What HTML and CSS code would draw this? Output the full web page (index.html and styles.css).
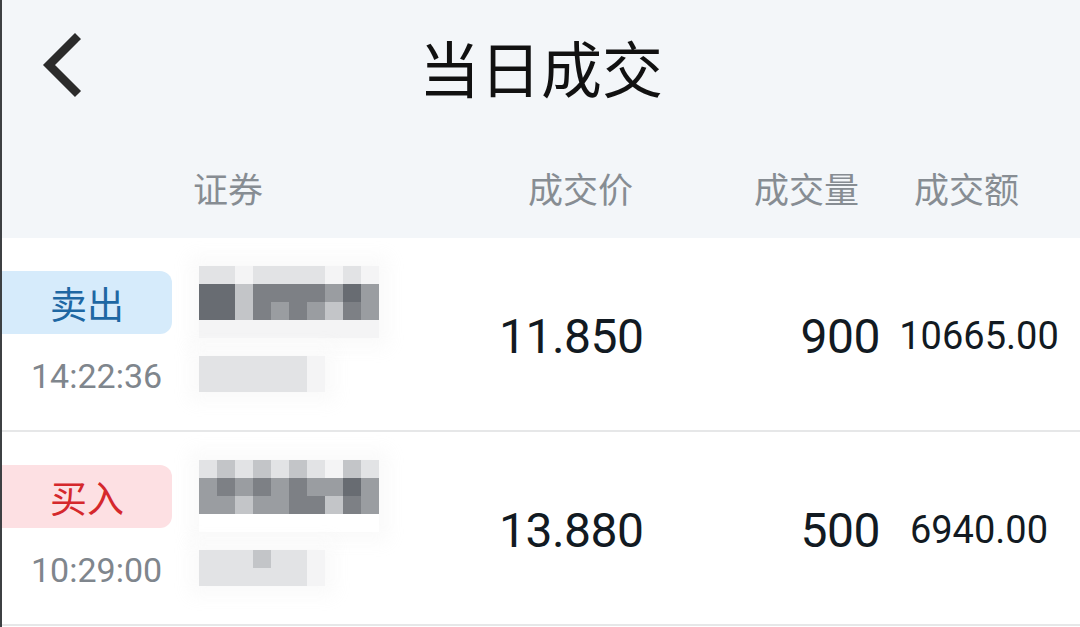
FILE: index.html
```html
<!DOCTYPE html>
<html lang="zh-CN">
<head>
  <meta charset="UTF-8">
  <meta name="viewport" content="width=device-width, initial-scale=1">
  <title>当日成交</title>
  <link rel="stylesheet" href="styles.css">
</head>
<body>
<div class="page">

  <header class="top">
    <div class="nav">
      <a class="back" href="#">
        <svg width="50" height="70" viewBox="0 0 50 70">
          <path d="M38 7 L12 33 L38 59" fill="none" stroke="#2b2b2b" stroke-width="8.5" stroke-linecap="square"/>
        </svg>
      </a>
      <h1>当日成交</h1>
    </div>
    <div class="cols grid">
      <span></span>
      <span class="h-name">证券</span>
      <span class="h-price">成交价</span>
      <span class="h-qty">成交量</span>
      <span class="h-amt">成交额</span>
    </div>
  </header>

  <div class="list">
    <!-- ligne 1 -->
    <div class="row grid">
      <div class="side">
        <span class="tag sell">卖出</span>
        <span class="time">14:22:36</span>
      </div>
      <div class="name">
        <div class="mosaic big">
          <i class="c1"></i><i class="c1"></i><i class="c0"></i><i class="c1"></i><i class="c1"></i><i class="c1"></i><i class="c1"></i><i class="c0"></i><i class="c1"></i><i class="c0"></i>
          <i class="c5"></i><i class="c5"></i><i class="c2"></i><i class="c4"></i><i class="c4"></i><i class="c4"></i><i class="c4"></i><i class="c3"></i><i class="c5"></i><i class="c3"></i>
          <i class="c5"></i><i class="c5"></i><i class="c2"></i><i class="c4"></i><i class="c3"></i><i class="c4"></i><i class="c3"></i><i class="c2"></i><i class="c4"></i><i class="c3"></i>
          <i class="c0"></i><i class="c0"></i><i class="c0"></i><i class="c0"></i><i class="c0"></i><i class="c0"></i><i class="c0"></i><i class="c0"></i><i class="c0"></i><i class="c0"></i>
        </div>
        <div class="mosaic small">
          <i class="c1"></i><i class="c1"></i><i class="c1"></i><i class="c1"></i><i class="c1"></i><i class="c1"></i><i class="c0"></i>
          <i class="c1"></i><i class="c1"></i><i class="c1"></i><i class="c1"></i><i class="c1"></i><i class="c1"></i><i class="c0"></i>
        </div>
      </div>
      <div class="price">11.850</div>
      <div class="qty">900</div>
      <div class="amt">10665.00</div>
    </div>

    <!-- ligne 2 -->
    <div class="row grid">
      <div class="side">
        <span class="tag buy">买入</span>
        <span class="time">10:29:00</span>
      </div>
      <div class="name">
        <div class="mosaic big">
          <i class="c1"></i><i class="c2"></i><i class="c1"></i><i class="c2"></i><i class="c1"></i><i class="c2"></i><i class="c1"></i><i class="c0"></i><i class="c2"></i><i class="c1"></i>
          <i class="c3"></i><i class="c4"></i><i class="c3"></i><i class="c4"></i><i class="c3"></i><i class="c4"></i><i class="c3"></i><i class="c3"></i><i class="c5"></i><i class="c3"></i>
          <i class="c3"></i><i class="c3"></i><i class="c2"></i><i class="c3"></i><i class="c3"></i><i class="c4"></i><i class="c4"></i><i class="c2"></i><i class="c4"></i><i class="c3"></i>
        </div>
        <div class="mosaic small">
          <i class="c1"></i><i class="c1"></i><i class="c1"></i><i class="c2"></i><i class="c1"></i><i class="c1"></i><i class="c0"></i>
          <i class="c1"></i><i class="c1"></i><i class="c1"></i><i class="c1"></i><i class="c1"></i><i class="c1"></i><i class="c0"></i>
        </div>
      </div>
      <div class="price">13.880</div>
      <div class="qty">500</div>
      <div class="amt">6940.00</div>
    </div>
  </div>

</div>
</body>
</html>
```

FILE: styles.css
```css
/* ---------- Base ---------- */
*{box-sizing:border-box;margin:0;padding:0;}

body{
  font-family:Roboto,"Noto Sans CJK SC",sans-serif;
  background:#fff;
  color:#121a22;
  width:1080px;
  height:627px;
  overflow:hidden;
}

.page{
  border-left:2px solid #3d4043;
  height:627px;
}

/* ---------- En-tête ---------- */
.top{
  background:#f3f6f9;
  height:238px;
}

.nav{
  position:relative;
  height:132px;
  display:flex;
  align-items:center;
  justify-content:center;
}

.back{
  position:absolute;
  left:35px;
  top:32px;
  display:block;
}

h1{
  font-size:61px;
  font-weight:400;
  color:#111;
}

/* grille commune */
.grid{
  display:grid;
  grid-template-columns:178px 290px 230px 190px 1fr;
}

.cols{
  height:106px;
  align-items:center;
  padding-top:4px;
  font-size:35px;
  color:#878d93;
}

.h-name {padding-left:13px;}
.h-price{padding-left:58px;}
.h-qty  {text-align:right;padding-right:31px;}
.h-amt  {padding-left:24px;}

/* ---------- Lignes ---------- */
.row{
  height:194px;
  border-bottom:2px solid #e6e7e8;
  align-items:center;
}

.side{
  align-self:start;
  display:flex;
  flex-direction:column;
  padding-top:33px;
}

.tag{
  width:170px;
  height:63px;
  border-radius:0 12px 12px 0;
  font-size:37px;
  display:flex;
  align-items:center;
  justify-content:center;
}
.sell{background:#d6ebfb;color:#1e67a3;}
.buy {background:#fde0e3;color:#d5282c;}

.time{
  margin-top:22px;
  padding-left:29px;
  font-size:34px;
  line-height:40px;
  color:#7f868d;
}

/* nom flouté */
.name{
  align-self:start;
  padding-top:28px;
  padding-left:19px;
}

.mosaic{
  display:grid;
  grid-auto-rows:18px;
  filter:blur(0.6px);
  box-shadow:0 0 16px 10px rgba(250,250,250,.9);
  width:max-content;
}
.mosaic i{display:block;}
.big  {grid-template-columns:repeat(10,18px);height:72px;}
.small{grid-template-columns:repeat(7,18px);margin-top:18px;}

.c0{background:#f4f4f5;}
.c1{background:#e2e3e5;}
.c2{background:#c3c5c8;}
.c3{background:#9a9da1;}
.c4{background:#7d8085;}
.c5{background:#686c72;}

.price{
  padding-left:29px;
  font-size:48px;
  letter-spacing:-0.5px;
  padding-top:4px;
}

.qty{
  text-align:right;
  padding-right:10px;
  font-size:48px;
  letter-spacing:-0.5px;
  padding-top:4px;
}

.amt{
  text-align:center;
  padding-right:12px;
  font-size:38px;
  padding-top:4px;
}
```
